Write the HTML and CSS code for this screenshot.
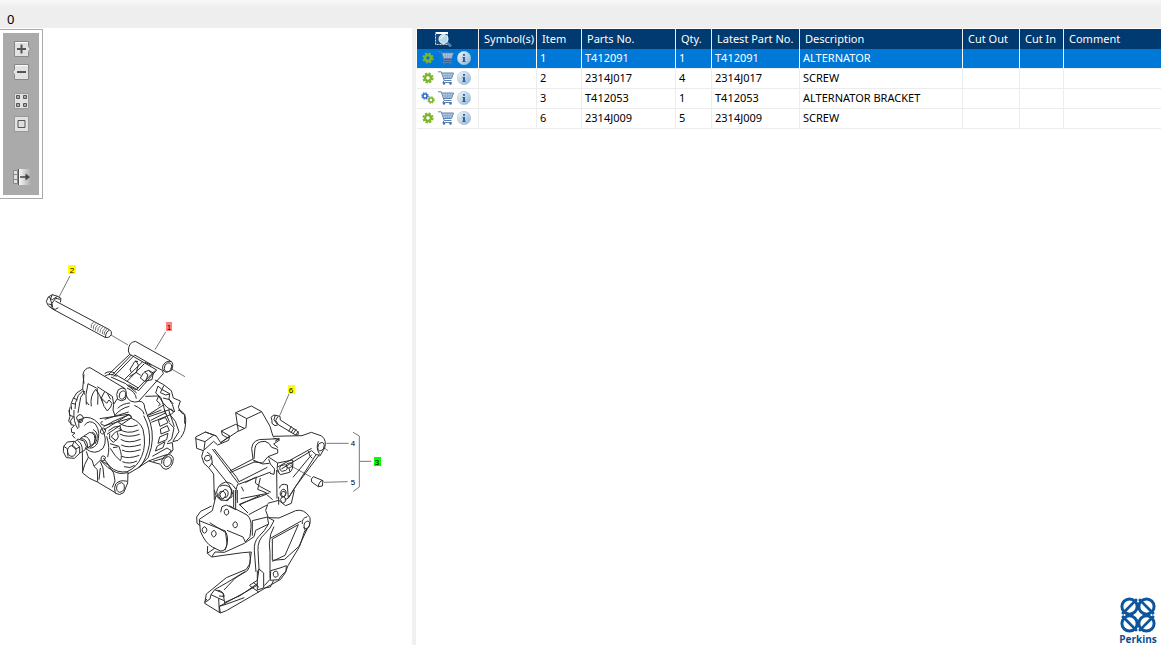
FILE: index.html
```html
<!DOCTYPE html>
<html lang="en">
<head>
<meta charset="utf-8">
<title>Parts catalogue</title>
<link rel="stylesheet" href="styles.css">
</head>
<body>
<svg class="defs" aria-hidden="true">
  <defs>
    <linearGradient id="steel" x1="0" y1="0" x2="1" y2="1"><stop offset="0" stop-color="#f2f8fc"/><stop offset="1" stop-color="#8fb4d1"/></linearGradient>
    <linearGradient id="fade"><stop offset="0" stop-color="#fff"/><stop offset="1" stop-color="#aaa"/></linearGradient>
    <symbol id="gear" viewBox="0 0 12 12">
      <circle cx="6" cy="6" r="4.6" fill="none" stroke="currentColor" stroke-width="2" stroke-dasharray="2.2 1.41"/>
      <circle cx="6" cy="6" r="3" fill="none" stroke="currentColor" stroke-width="2.4"/>
    </symbol>
    <symbol id="cart" viewBox="0 0 16 14">
      <path d="M4 2h11.500L13.500 7.500H6z" fill="#c3d4e4"/>
      <path d="M4.700 4.200h9.600M5.300 5.900h8.400M7 2.500l1 5M9.700 2.500v5M12.400 2.500l-1 5" fill="none" stroke="#7f9fc2" stroke-width=".7"/>
      <path d="M0 .8h3.200l3 8.700h7.300M4 2h11.500L13.500 7.500H6M6.300 9.500l-1.500 2h9" fill="none" stroke="#5c82b0"/>
      <circle cx="6" cy="12.500" r="1.200" fill="#4a74a8"/><circle cx="12.500" cy="12.500" r="1.200" fill="#4a74a8"/>
    </symbol>
    <symbol id="info" viewBox="0 0 14 14">
      <circle cx="7" cy="7" r="6.700" fill="url(#steel)" stroke="#a5c4dc" stroke-width=".6"/>
      <path d="M6 3h2v1.800H6zM5.500 6H8v4h.6v1H5.400v-1H6V7h-.5z" fill="#2f639e"/>
    </symbol>
  </defs>
</svg>
<header class="topbar">0</header>
<main class="split">
  <section class="viewer">
    <div class="toolbar">
      <div class="toolbar-inner">
        <button class="tool" aria-label="Zoom in"><svg viewBox="0 0 18 16"><path d="M1.500 .5h14v5l2 2.500-2 2.500v5h-14z" fill="#e2e2e2" stroke="#888"/><path d="M2.500 1.500h12" stroke="#fff"/><path d="M4 8h9M8.500 3.500v9" stroke="#555" stroke-width="2"/></svg></button>
        <button class="tool" aria-label="Zoom out"><svg viewBox="0 0 18 16"><path d="M1.500 .5h14v15h-14v-5l-2-2.500 2-2.500z" fill="#e2e2e2" stroke="#888"/><path d="M2.500 1.500h12" stroke="#fff"/><path d="M4 8h9" stroke="#555" stroke-width="2"/></svg></button>
        <button class="tool tool-grid" aria-label="Thumbnails"><svg viewBox="0 0 18 16"><path d="M1.500 .5h14v15h-14z" fill="#e2e2e2" stroke="#999"/><path d="M3.500 2.500h3v3h-3zM10.500 2.500h3v3h-3zM3.500 10.500h3v3h-3zM10.500 10.500h3v3h-3z" fill="#aaa" stroke="#555"/></svg></button>
        <button class="tool" aria-label="Fit to window"><svg viewBox="0 0 18 16"><path d="M1.500 .5h14v15h-14z" fill="#e2e2e2" stroke="#999"/><path d="M5 4.500h7v7H5z" fill="#ddd" stroke="#555"/></svg></button>
        <button class="tool tool-last" aria-label="Hide panel"><svg viewBox="0 0 18 16"><path d="M5 0h13v16H5z" fill="url(#fade)"/><path d="M.5 1.500h4v13h-4zM.5 5.500h4M.5 10.500h4" fill="#e2e2e2" stroke="#888"/><path d="M5.500 0v16" stroke="#555"/><path d="M7 8h8" stroke="#444" stroke-width="1.500"/><path d="M12.500 4.500L17 8l-4.500 3.500z" fill="#444"/></svg></button>
      </div>
    </div>
    <svg class="drawing" viewBox="0 28 412 617" role="img" aria-label="Alternator and bracket exploded view">
      <g class="lines" transform="translate(30 255) scale(.33333)">
        <path class="ld" d="M120 63L87 126M243 240L294 270M407 231L375 284M421 340L465 365"/>
        <path d="M76 138L238 224M66 161L225 247M238 224Q247 228 244 238Q239 250 225 247M238 226Q228 229 226 247"/>
        <path d="M55 126L67 119L83 124L93 130L91 142M55 126L49 139L54 151L63 159L76 163L85 158M67 119L61 132L65 145L63 159M77 130L66 145L68 158M77 130L91 133M83 124L67 134L55 126M55 147L65 149"/>
        <path class="ld" d="M191 201Q181 207 184 219M198 205Q188 211 190 223M205 208Q195 215 196 227M212 212Q202 219 203 230M219 215Q209 222 210 233M226 219Q216 226 217 237M231 222Q222 229 222 240"/>
      </g>
      <g class="lines" transform="translate(55 335) scale(.33333)">
        <path d="M220 48Q220 22 241 19L347 78Q358 85 350 106L334 112Q319 108 324 91Q334 75 349 80M338 84A10 13 20 1 0 340 110A10 13 20 0 0 338 84M220 48L224 58L162 117M230 59L171 121M239 60L176 125M239 60L291 90L322 106M322 106L325 116L251 199M224 58L305 105L250 168M300 107L243 165M263 80L208 134M268 86L216 139M249 79L239 80L225 103L229 112M242 76L250 90L244 112L223 125M268 111L281 106L295 114L291 134L269 139L256 129L266 113M268 111L279 119L273 137M281 106L291 116M243 165L217 151M179 117L250 159M168 126L212 146L245 174M289 91L270 82M243 112L257 121"/>
        <path d="M87 146L84 118Q88 99 105 98L209 160Q218 173 211 193Q199 202 188 193Q181 177 190 164Q202 155 211 162M202 168A8 11 20 1 0 203 192A8 11 20 0 0 202 168M87 118L83 162L89 179M99 146L124 159M127 155L172 184M99 146L93 179L94 209M187 191L176 208L174 225L181 245M172 184L176 207M149 116Q163 105 180 115M150 123Q165 113 185 124"/>
        <path d="M83 162L65 174L54 192L48 207L50 224M83 168L70 181L62 202L60 222M90 168L77 187L73 210L69 234M94 200L102 210M109 214Q104 183 122 163Q133 174 143 202M128 209Q131 180 126 158M142 199L139 189L155 205L162 195L171 205L167 216L157 228L147 214zM157 175L167 193M149 170L139 189M55 189L68 195M51 205L63 208M46 215L42 228L45 244L41 258L49 268"/>
        <path d="M213 180Q223 208 253 199Q269 199 269 219L279 246M221 149L250 166M216 159Q242 170 244 191M188 220Q203 205 225 204M179 242Q196 220 223 214M238 211Q266 224 267 238M300 135L326 149L349 167L355 189L376 198L370 217L380 234L389 239L389 266M309 153L320 163L344 176L342 192L352 208L359 231M309 153L302 174L318 188L327 216M327 151L316 173L332 180L344 177M271 184L311 183L305 197L316 207L310 214M311 183L323 202L335 216L356 230M324 189L344 194L355 207M282 245L349 222L356 231L349 238L289 262M279 240L324 211M326 216L333 239"/>
        <path d="M134 251L219 238Q230 239 229 249L145 273M149 253L221 231M77 253A7 5 0 1 0 82 260A7 5 0 0 0 77 253M143 259A6 5 0 1 0 146 270"/>
      </g>
      <g class="lines" transform="translate(55 410) scale(.33333)">
        <path d="M43 0L44 16L56 20L47 31L48 44L58 46L49 56L50 67L60 69L52 76L60 85M57 0Q54 35 69 57M68 17A8 8 0 1 0 82 31A8 8 0 1 0 68 17M72 53Q66 25 93 22Q120 22 139 52Q160 88 144 115Q120 138 92 116M88 46Q103 27 121 42Q139 67 126 102Q112 121 94 111M114 58Q137 71 120 102M111 66Q130 72 116 103L105 112"/>
        <path d="M37 96L58 94L74 111L74 130L58 145L34 143L25 125L26 109zM50 107A13 16 0 1 0 51 139A13 16 0 1 0 50 107M60 95L69 87L87 93L94 109L89 121L74 129M67 91Q83 101 82 123M75 86L104 67Q125 69 118 99L93 117M77 86Q98 85 98 114M87 79Q105 80 106 106M26 109L37 116L39 140M58 94L51 108L62 117L74 111"/>
        <path d="M82 123L83 189Q101 207 127 216L181 248M83 185L89 164L100 142L111 150L117 169L127 179L128 215M100 142L94 124M117 169L136 151L159 164L176 189L180 213L172 232M136 155L144 174L147 204M136 174L132 209M137 151L158 172L177 184Q193 194 217 188M145 144L164 169Q185 190 219 185L218 219L206 248Q195 258 181 250Q176 233 182 222Q195 208 216 214M195 219A10 13 20 1 0 198 246A10 13 20 0 0 195 219"/>
        <path d="M138 60A7 7 0 1 0 150 66A7 7 0 1 0 138 60M139 143A6 6 0 1 0 150 147A6 6 0 1 0 139 143M146 60L219 15Q228 14 230 23L156 73M148 49L175 34L220 15M160 63Q176 47 195 48L199 61Q178 63 169 81L183 92L190 81L187 67M164 71L164 87L175 97L185 88M165 101L192 109Q204 142 196 152Q180 140 166 115M174 113L188 111M155 79Q166 114 158 141"/>
        <path d="M190 37Q217 58 248 45M191 55Q215 76 251 60M194 72Q219 85 254 73M197 88Q220 103 257 88M199 105Q218 116 258 104M201 120Q220 131 257 119M201 139Q219 148 253 136M202 155Q223 164 246 153M207 170Q226 177 239 166M229 25Q255 35 264 58Q275 106 260 139Q248 170 217 185M266 17Q288 56 283 104Q275 145 256 170L218 192M277 15Q299 62 289 112L280 142L251 172"/>
        <path d="M279 16L319 0M287 31L331 9M310 31L331 22L339 38L315 49zM316 57L337 47L343 62L318 72zM314 81L339 70L335 89L309 100zM307 108L330 95L324 113L301 123zM292 139L336 114L349 122L329 144L294 154M336 101L352 98L354 120L344 132M343 39L357 54L350 87L338 96M342 10L361 34L372 65L354 93M369 0Q398 4 391 48Q388 75 369 91L353 95M251 172L281 153L317 163M281 153L302 145L331 135Q351 130 355 145Q354 174 333 178Q321 177 317 164M320 161Q318 142 337 134M336 141A9 13 20 1 0 339 169A9 13 20 0 0 336 141M328 0L344 37M341 0L358 50"/>
      </g>
      <g class="lines" transform="translate(190 380) scale(.33333)">
        <path class="ld" d="M297 42L269 107M409 190L476 190M300 256L363 291M402 307L473 305M489 157L508 168V321L490 334M508 244H544M403 204L414 212"/>
        <path d="M246 122L243 112L252 105L270 109L271 120L319 151Q330 158 323 166L315 164L265 134L255 137L246 130zM256 105L252 119L261 132M264 109L257 121L265 134M312 144L303 158M319 147L309 162M325 153L317 166M304 139L296 154"/>
        <path d="M17 171L46 156L79 168L92 188L145 153L137 98L184 78L215 95L240 139L249 169M17 171L20 205L40 212L71 184L83 195L116 181L119 168L94 153L137 133M94 153L97 165L112 173M46 156L79 168M17 176L45 185L69 167M45 185L42 210M137 98L170 116L215 95M170 116L168 143L145 154M137 133L163 145M92 188L119 168"/>
        <path d="M40 212L35 229L42 250L56 263L67 249L64 227L51 216M51 227A7 8 0 1 0 54 242A7 8 0 1 0 51 227M56 263L71 282L73 360M67 207L145 310Q135 326 137 360M73 207L82 219L140 292M64 249L118 316L128 342M120 273L189 237L185 205Q188 175 225 178L268 176L255 184M192 237L195 204Q198 184 225 184Q238 187 245 202L263 208L263 219L234 230L218 249L193 246M189 240L218 252L238 250M120 278L197 244M140 292L147 305L232 262M146 313L242 276M249 169L336 167L364 157L395 168Q411 181 404 204L389 229M250 174L269 180L251 192L264 203M385 184Q377 204 388 221M393 188A8 11 20 1 0 393 212A8 11 20 0 0 393 188M263 261L365 205M274 267L365 212L378 224L295 354M388 224L315 322L295 354M378 224L389 225M356 213Q356 230 367 235"/>
        <path d="M234 230L263 249L308 240Q311 271 299 277L271 284L260 270L261 356M263 249Q258 266 267 277M279 256A8 9 0 1 0 282 272A8 9 0 1 0 279 256M297 250A6 7 0 1 0 299 262A6 7 0 1 0 297 250M236 237L241 252L254 267L252 283L240 280M199 290L196 309L211 320L243 337M166 308L196 292M154 320L161 334M211 294L203 328L230 339M268 325Q272 308 292 315L295 354L284 360M279 334A6 8 0 1 0 282 350A6 8 0 1 0 279 334M297 264L300 276M365 224L309 292"/>
        <path d="M370 290L399 302L397 318L385 320L365 306Q361 296 370 290M399 302Q387 302 385 320M107 306Q126 307 137 327M107 306Q83 313 80 336Q79 351 94 360M89 319Q108 309 125 327L126 351L109 360M98 334A9 12 0 1 0 103 352A9 12 0 1 0 98 334"/>
      </g>
      <g class="lines" transform="translate(190 490) scale(.33333)">
        <path d="M73 0L78 17L92 30L113 32L123 16L125 0M137 0V59L109 45L96 50M131 0V52M78 17L67 62L28 88M65 48L32 64L20 81L21 100L31 107M28 88L31 123Q45 159 67 171L91 183Q109 184 111 160L106 123L28 92M59 98L109 129Q118 151 105 181M93 7A7 9 0 1 0 104 23A7 9 0 1 0 93 7M39 113A6 8 0 1 0 48 127A6 8 0 1 0 39 113M67 124A6 8 0 1 0 76 138A6 8 0 1 0 67 124M106 59A6 8 0 1 0 113 74A6 8 0 1 0 106 59M132 97A6 8 0 1 0 139 112A6 8 0 1 0 132 97M96 50L92 67M118 47L171 75Q185 87 183 112L180 140L166 156L159 141L111 121"/>
        <path d="M53 168L52 190L65 201L158 188L184 186L179 222L169 238L109 263L49 312L44 340L91 369L109 362L182 320L226 294L272 268L286 248M52 190L75 174M65 201L75 186L103 187L163 160M176 74L233 44L227 61L235 83L252 92M174 69L148 43L165 36L229 13M142 0V39M148 45L210 16M233 40L266 31L287 47L304 40L313 0M152 26L238 9M229 13L248 29M273 4A8 10 0 1 0 286 15A8 10 0 1 0 273 4M275 22A7 9 0 1 0 284 37A7 9 0 1 0 275 22M266 20V44"/>
        <path d="M235 83L267 84L317 62Q343 55 360 83Q364 111 344 123L329 169L294 227L286 248M252 92Q242 116 225 131Q202 150 204 181L207 237L202 271L180 285M235 103Q225 122 206 140Q191 156 193 182L198 246M187 92L232 81L236 102L197 121L192 140L163 160M187 92V137M252 110L242 133Q235 163 240 187V265M241 145L334 93M247 147V211L284 208L327 169L352 116M247 147L325 104L285 196L247 214M350 94A8 11 20 1 0 351 115A8 11 20 0 0 350 94M337 102Q334 85 352 80M347 124L341 111M179 188Q185 225 172 242L136 264L102 300M202 246L207 237L221 249V294L202 300V246M178 286L207 307M190 277L207 292M241 271L242 242L270 234L289 227L288 244L274 257L266 269L241 271M254 244A7 9 0 1 0 260 261A7 9 0 1 0 254 244"/>
        <path d="M63 314L74 299L99 309L103 332L86 325L63 314L60 327L45 337M86 325L88 367M103 332L105 344L88 349L91 369M74 299L109 279L165 245M88 349L176 301L201 286M105 337L150 317L202 281M105 344L163 323M45 334L51 327M83 301Q98 301 103 319L87 318M240 268L223 287M223 294L241 291L251 271"/>
      </g>
      <g class="callouts">
        <rect x="68" y="265" width="8" height="9" fill="#ff0"/><rect x="166" y="322" width="6" height="9" fill="#ff8080"/><rect x="288" y="385" width="7" height="9" fill="#ff0"/><rect x="374" y="457" width="7" height="9" fill="#0f0"/>
        <text x="72" y="273">2</text><text x="169" y="330">1</text><text x="291" y="393">6</text><text x="353" y="446">4</text><text x="377" y="465">3</text><text x="353" y="485">5</text>
      </g>
    </svg>
  </section>
  <div class="divider"></div>
  <section class="parts">
    <table>
      <colgroup><col class="c-actions"><col class="c-symbol"><col class="c-item"><col class="c-part"><col class="c-qty"><col class="c-latest"><col class="c-desc"><col class="c-out"><col class="c-in"><col></colgroup>
      <thead>
        <tr><th class="find"><svg viewBox="0 0 18 16" role="img" aria-label="Search"><path d="M.5 1.500h12v12H.5z" fill="#174c80" stroke="#ddd" stroke-dasharray="2 1"/><path d="M1 2h12" stroke="#fff" stroke-width="2"/><circle cx="8.500" cy="8" r="4.500" fill="#b8d7e9" stroke="#f0fbff"/><path d="M12 11.500l4 4" stroke="#5385b4" stroke-width="2.500"/><path d="M6 8q0-3 3-3" stroke="#fff" fill="none"/></svg></th><th>Symbol(s)</th><th>Item</th><th>Parts No.</th><th>Qty.</th><th>Latest Part No.</th><th>Description</th><th>Cut Out</th><th>Cut In</th><th>Comment</th></tr>
      </thead>
      <tbody>
        <tr class="selected"><td><div class="actions"><svg class="gear"><use href="#gear"/></svg><svg class="cart"><use href="#cart"/></svg><svg class="info"><use href="#info"/></svg></div></td><td></td><td>1</td><td>T412091</td><td>1</td><td>T412091</td><td>ALTERNATOR</td><td></td><td></td><td></td></tr>
        <tr><td><div class="actions"><svg class="gear"><use href="#gear"/></svg><svg class="cart"><use href="#cart"/></svg><svg class="info"><use href="#info"/></svg></div></td><td></td><td>2</td><td>2314J017</td><td>4</td><td>2314J017</td><td>SCREW</td><td></td><td></td><td></td></tr>
        <tr><td><div class="actions"><svg class="gear" viewBox="0 0 14 12"><use class="blue" href="#gear" width="8" height="8"/><use href="#gear" x="6" y="4" width="8" height="8"/></svg><svg class="cart"><use href="#cart"/></svg><svg class="info"><use href="#info"/></svg></div></td><td></td><td>3</td><td>T412053</td><td>1</td><td>T412053</td><td>ALTERNATOR BRACKET</td><td></td><td></td><td></td></tr>
        <tr><td><div class="actions"><svg class="gear"><use href="#gear"/></svg><svg class="cart"><use href="#cart"/></svg><svg class="info"><use href="#info"/></svg></div></td><td></td><td>6</td><td>2314J009</td><td>5</td><td>2314J009</td><td>SCREW</td><td></td><td></td><td></td></tr>
      </tbody>
    </table>
    <footer class="brand">
      <svg viewBox="0 0 34 34" aria-hidden="true"><g fill="none" stroke="#0d559d"><g stroke-width="2.800"><circle cx="9" cy="9" r="7.200"/><circle cx="25" cy="9" r="7.200"/><circle cx="9" cy="25" r="7.200"/><circle cx="25" cy="25" r="7.200"/></g><path stroke-width="2.600" d="M2 16L16 2M18 2l14 14M2 18l14 14M18 32l14-14"/></g></svg>
      <span>Perkins</span>
    </footer>
  </section>
</main>
</body>
</html>
```
FILE: styles.css
```css
* { box-sizing: border-box; }
body {
  margin: 0;
  min-height: 100vh;
  display: flex;
  flex-direction: column;
  background: #fff;
  color: #000;
  font: 11px/16px "Noto Sans", "Open Sans", sans-serif;
}
.defs { position: absolute; width: 0; height: 0; }
.topbar {
  height: 28px;
  padding: 11px 7px 0;
  background: linear-gradient(#f7f7f7, #eee 8px);
  font-size: 13px;
}
.split {
  flex: 1;
  display: grid;
  grid-template-columns: minmax(0, 412fr) 4px minmax(0, 745fr);
}
.viewer { position: relative; }
.divider { background: #f0f0f0; }
.drawing { display: block; width: 100%; height: auto; }
.lines { fill: none; stroke: #2c2c2c; stroke-width: 3; stroke-linejoin: round; }
.ld { stroke: #777; }
.callouts { font: 8px "Liberation Sans", sans-serif; text-anchor: middle; }
.toolbar {
  position: absolute;
  top: 1px;
  left: 0;
  padding: 3px;
  background: #fff;
  border: 1px solid #aaa;
  border-left: 0;
}
.toolbar-inner {
  display: flex;
  flex-direction: column;
  align-items: center;
  gap: 7px;
  width: 36px;
  height: 162px;
  padding: 8px 0 10px 2px;
  background: #aaa;
}
.tool {
  width: 18px;
  height: 16px;
  padding: 0;
  border: 0;
  background: none;
}
.tool svg { display: block; width: 18px; height: 16px; overflow: visible; }
.tool-grid { margin-top: 6px; }
.tool-last { margin-top: auto; }
.parts {
  display: flex;
  flex-direction: column;
  justify-content: space-between;
  padding-left: 1px;
}
table {
  width: 100%;
  margin-top: 1px;
  table-layout: fixed;
  border-collapse: separate;
  border-spacing: 0;
}
.c-actions { width: 62px; }
.c-symbol { width: 58px; }
.c-item { width: 45px; }
.c-part { width: 94px; }
.c-qty { width: 36px; }
.c-latest { width: 88px; }
.c-desc { width: 163px; }
.c-out { width: 57px; }
.c-in { width: 44px; }
th, td {
  height: 20px;
  padding: 0 0 2px 3px;
  border-right: 1px solid #ececec;
  border-bottom: 1px solid #ececec;
  text-align: left;
  white-space: nowrap;
}
th {
  padding: 0 0 0 5px;
  background: #003a70;
  border-bottom: 0;
  color: #fff;
  font-weight: 400;
}
th:last-child, td:last-child { border-right: 0; }
.selected td { background: #0078d7; color: #fff; border-right-color: #fff; }
th.find { padding-left: 18px; }
.find svg { display: block; width: 18px; height: 16px; }
.actions { display: flex; align-items: center; gap: 3px; padding-left: 1px; }
.gear { width: 14px; height: 12px; color: #7db62b; }
.blue { color: #386fd3; }
.cart { width: 16px; height: 14px; }
.info { width: 14px; height: 14px; }
.brand {
  align-self: flex-end;
  display: flex;
  flex-direction: column;
  align-items: center;
  width: 46px;
  color: #0d4f91;
  font: bold 10px/12px "Open Sans", sans-serif;
}
.brand svg { width: 36px; height: 36px; }
```
